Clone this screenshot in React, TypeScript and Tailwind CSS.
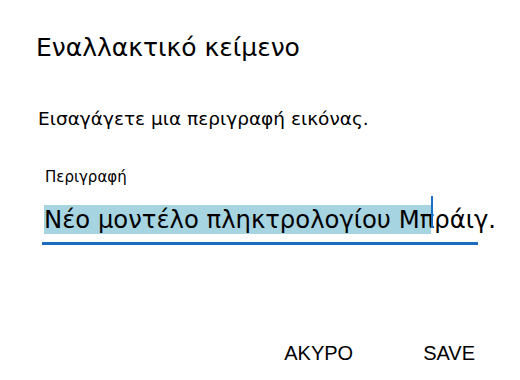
import React from "react";

const App = () => {
  return (
    <div
      className="w-[520px] h-[380px] bg-white text-black flex flex-col pl-[36px] pr-[24px]"
      style={{ fontFamily: '"DejaVu Sans", Verdana, sans-serif' }}
    >
      <h1 className="mt-[32px] text-[25px] leading-[32px] font-normal">
        Εναλλακτικό κείμενο
      </h1>
      <p className="mt-[43px] text-[18.5px] leading-[24px] pl-[2px]">
        Εισαγάγετε μια περιγραφή εικόνας.
      </p>
      <label className="mt-[37px] text-[15px] leading-[18px] pl-[9px]">
        Περιγραφή
      </label>
      <div className="mt-[19px] relative w-fit">
        <div className="flex items-center text-[24.3px] leading-[29px] pl-[8px] whitespace-nowrap">
          <span className="bg-[#a7d4e1]">Νέο μοντέλο πληκτρολογίου Μ</span>
          <span className="relative">
            <span className="absolute left-0 top-0 bottom-0 w-[11px] bg-[#a7d4e1]"></span>
            <span className="relative">π</span>
            <span className="absolute left-[11px] top-[-9px] w-[2px] h-[32px] bg-[#1c6fc5]"></span>
          </span>
          <span>ράιγ.</span>
        </div>
        <div className="mt-[8px] ml-[6px] w-[436px] h-[3px] bg-[#1a6dbf]"></div>
      </div>
      <div
        className="mt-auto mb-[16px] flex justify-end gap-[70px] pr-[21px] text-[20px] leading-[22px]"
        style={{ fontFamily: '"Liberation Sans", Arial, sans-serif' }}
      >
        <button type="button">ΑΚΥΡΟ</button>
        <button type="button">SAVE</button>
      </div>
    </div>
  );
};

export default App;
